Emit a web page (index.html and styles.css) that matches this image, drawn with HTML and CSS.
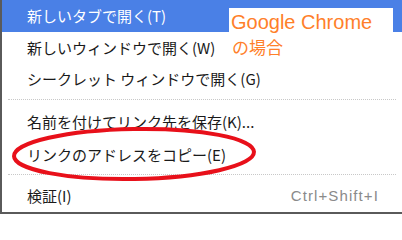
FILE: index.html
```html
<!DOCTYPE html>
<html lang="ja">
<head>
<meta charset="utf-8">
<link rel="stylesheet" href="styles.css">
</head>
<body>
<div class="menu">
  <div class="item active">新しいタブで開く(T)</div>
  <div class="item">新しいウィンドウで開く(W)</div>
  <div class="item">シークレット ウィンドウで開く(G)</div>
  <div class="sep"></div>
  <div class="item">名前を付けてリンク先を保存(K)...</div>
  <div class="item tall">リンクのアドレスをコピー(E)</div>
  <div class="sep sep-tight"></div>
  <div class="item split"><span>検証(I)</span><span class="shortcut">Ctrl+Shift+I</span></div>

  <div class="note">
    <div class="note-title">Google Chrome</div>
    <div class="note-sub">の場合</div>
  </div>
  <svg class="ring" width="260" height="60" viewBox="0 0 260 60">
    <ellipse cx="123" cy="28" rx="120" ry="25" fill="none" stroke="#e8101a" stroke-width="4" transform="rotate(-1 123 28)"/>
  </svg>
</div>
</body>
</html>
```
FILE: styles.css
```css
html, body {
  margin: 0;
  padding: 0;
  background: #ffffff;
}
.menu {
  position: relative;
  width: 400px;
  height: 212px;
  border-left: 2px solid #5a5a5a;
  border-bottom: 2px solid #5a5a5a;
  background: #ffffff;
  font-family: "Noto Sans CJK JP", "Liberation Sans", sans-serif;
  font-size: 15px;
  color: #1a1a1a;
  overflow: hidden;
}
.item {
  height: 31px;
  line-height: 31px;
  padding-left: 25px;
  white-space: nowrap;
}
.item.active {
  height: 32px;
  line-height: 32px;
  background: #4a80e6;
  color: #ffffff;
}
.item.tall {
  height: 35px;
  line-height: 35px;
}
.item.split {
  display: flex;
  justify-content: space-between;
  padding-right: 23px;
  height: 30px;
  line-height: 30px;
}
.shortcut {
  color: #8a8a8a;
  font-family: "Liberation Sans", sans-serif;
  letter-spacing: 1.1px;
}
.sep {
  height: 1px;
  margin: 5px 6px 5px 6px;
  border-top: 1px dotted #c8c8c8;
}
.sep.sep-tight {
  margin-top: 2px;
}
.note {
  position: absolute;
  left: 227px;
  top: 8px;
  width: 164px;
  height: 52px;
  background: #ffffff;
  color: #ff7f2a;
}
.note-title {
  font-family: "Liberation Sans", sans-serif;
  font-size: 20px;
  line-height: 22px;
  padding-top: 3px;
  padding-left: 2px;
}
.note-sub {
  font-size: 17px;
  line-height: 24px;
  padding-top: 2px;
  padding-left: 3px;
}
.ring {
  position: absolute;
  left: 9px;
  top: 126px;
}
```
